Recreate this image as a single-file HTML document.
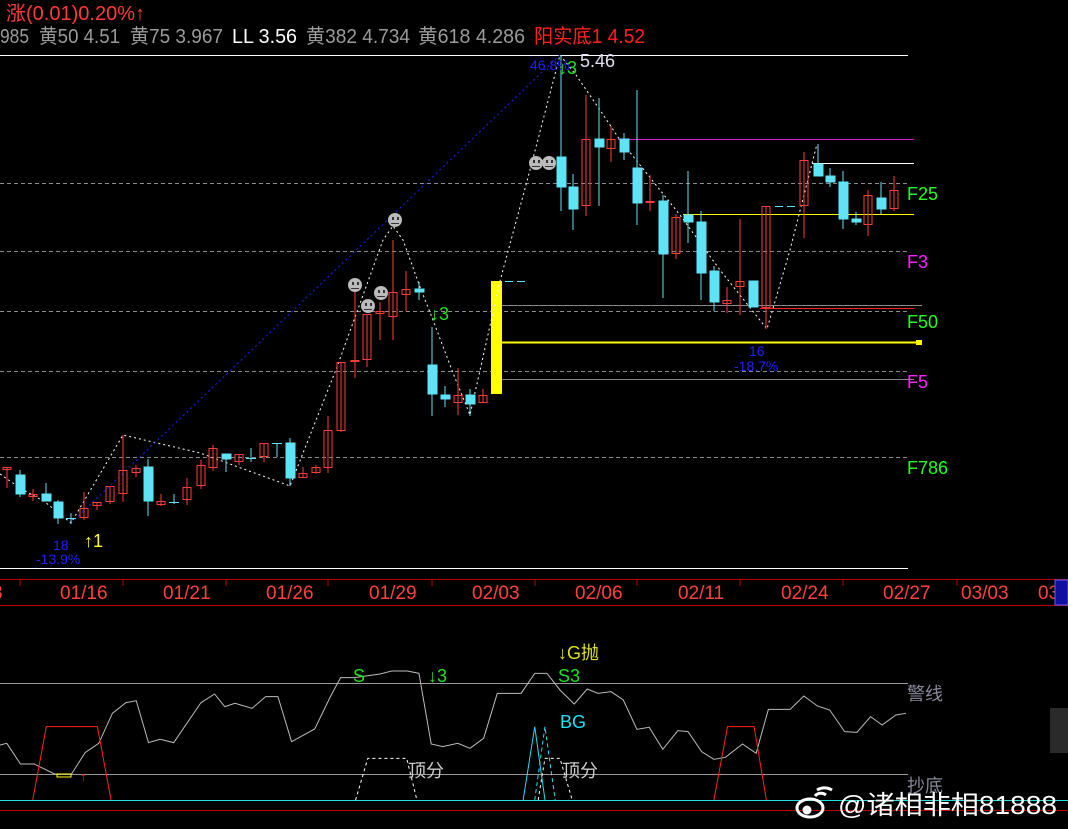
<!DOCTYPE html>
<html><head><meta charset="utf-8"><style>
html,body{margin:0;padding:0;background:#000;width:1068px;height:829px;overflow:hidden}
svg{display:block}
text{font-family:"Liberation Sans","Noto Sans CJK SC",sans-serif}
</style></head><body>
<svg width="1068" height="829" viewBox="0 0 1068 829" xmlns="http://www.w3.org/2000/svg">
<rect width="1068" height="829" fill="#000"/>
<!-- header -->
<text x="6" y="20" font-size="20" fill="#ff3a3a" textLength="139" lengthAdjust="spacingAndGlyphs">涨(0.01)0.20%↑</text>
<g font-size="20" fill="#9a9a9a">
<text x="0" y="43" textLength="29" lengthAdjust="spacingAndGlyphs">985</text>
<text x="39" y="43" textLength="81" lengthAdjust="spacingAndGlyphs">黄50 4.51</text>
<text x="130" y="43" textLength="93" lengthAdjust="spacingAndGlyphs">黄75 3.967</text>
<text x="232" y="43" textLength="65" lengthAdjust="spacingAndGlyphs" fill="#fff">LL 3.56</text>
<text x="306" y="43" textLength="104" lengthAdjust="spacingAndGlyphs">黄382 4.734</text>
<text x="418" y="43" textLength="107" lengthAdjust="spacingAndGlyphs">黄618 4.286</text>
<text x="534" y="43" textLength="111" lengthAdjust="spacingAndGlyphs" fill="#ff2020">阳实底1 4.52</text>
</g>

<!-- main lines -->
<line x1="0" y1="55.5" x2="908" y2="55.5" stroke="#fff"/>
<g stroke="#8a8a8a" stroke-dasharray="4,3">
<line x1="0" y1="183.5" x2="908" y2="183.5"/>
<line x1="0" y1="251.5" x2="908" y2="251.5"/>
<line x1="0" y1="311.5" x2="908" y2="311.5"/>
<line x1="0" y1="371.5" x2="908" y2="371.5"/>
<line x1="0" y1="457.5" x2="908" y2="457.5"/>
</g>
<line x1="0" y1="568.5" x2="908" y2="568.5" stroke="#fff"/>
<line x1="618" y1="139.5" x2="914" y2="139.5" stroke="#d020d0"/>
<line x1="812" y1="163.5" x2="914" y2="163.5" stroke="#fff"/>
<line x1="683" y1="214.5" x2="914" y2="214.5" stroke="#ffff00"/>
<line x1="496" y1="305.5" x2="922" y2="305.5" stroke="#888"/>
<line x1="760" y1="308.5" x2="914" y2="308.5" stroke="#ff2020"/>
<line x1="502" y1="342.5" x2="918" y2="342.5" stroke="#ffff00" stroke-width="2"/>
<rect x="916" y="340" width="6" height="5" fill="#ffff00"/>
<line x1="496" y1="379.5" x2="914" y2="379.5" stroke="#888"/>
<line x1="505" y1="281.5" x2="526" y2="281.5" stroke="#5ee3f7" stroke-dasharray="8,4"/>
<line x1="775" y1="206.5" x2="797" y2="206.5" stroke="#5ee3f7" stroke-dasharray="8,4"/>
<rect x="491" y="281" width="11" height="113" fill="#ffff00"/>

<!-- zigzags -->
<polyline points="0,474 20,488 45,502 71,523 123,435 200,453 290,486 337,367 383,240 393,226 403,240 420,287 433,320 453,373 470,415 500,281 530,170 560,55 576,75 600,110 620,140 640,165 680,215 720,270 767,329 790,250 817,144" fill="none" stroke="#fff" stroke-dasharray="2,3"/>
<line x1="71" y1="523" x2="560" y2="55" stroke="#2020ff" stroke-dasharray="2,3"/>

<!-- candles -->
<g stroke-width="1">
<g stroke="#ff3c3c" fill="none">
<line x1="7" y1="468" x2="7" y2="488"/><rect x="3" y="467.5" width="8" height="2"/>
<line x1="33" y1="489" x2="33" y2="501"/><rect x="29" y="494.5" width="8" height="2"/>
<line x1="84" y1="492" x2="84" y2="520"/><rect x="80" y="508.5" width="8" height="9"/>
<line x1="97" y1="502" x2="97" y2="510"/><rect x="93" y="502.5" width="8" height="3"/>
<line x1="110" y1="486" x2="110" y2="504"/><rect x="106" y="486.5" width="8" height="15"/>
<line x1="123" y1="435" x2="123" y2="502"/><rect x="119" y="470.5" width="8" height="23"/>
<line x1="136" y1="465" x2="136" y2="477"/><rect x="132" y="468.5" width="8" height="4"/>
<line x1="161" y1="494" x2="161" y2="506"/><rect x="157" y="501.5" width="8" height="3"/>
<line x1="187" y1="478" x2="187" y2="505"/><rect x="183" y="487.5" width="8" height="12"/>
<line x1="201" y1="460" x2="201" y2="489"/><rect x="197" y="465.5" width="8" height="20"/>
<line x1="213" y1="445" x2="213" y2="471"/><rect x="209" y="448.5" width="8" height="19"/>
<line x1="239" y1="454" x2="239" y2="465"/><rect x="235" y="454.5" width="8" height="7"/>
<line x1="264" y1="443" x2="264" y2="462"/><rect x="260" y="443.5" width="8" height="13"/>
<line x1="303" y1="467" x2="303" y2="477"/><rect x="299" y="473.5" width="8" height="4"/>
<line x1="316" y1="465" x2="316" y2="474"/><rect x="312" y="467.5" width="8" height="5"/>
<line x1="328" y1="416" x2="328" y2="473"/><rect x="324" y="430.5" width="8" height="37"/>
<line x1="341" y1="362" x2="341" y2="432"/><rect x="337" y="362.5" width="8" height="68"/>
<line x1="355" y1="290" x2="355" y2="378"/><rect x="351" y="360.5" width="8" height="1"/>
<line x1="367" y1="314" x2="367" y2="367"/><rect x="363" y="314.5" width="8" height="45"/>
<line x1="380" y1="302" x2="380" y2="340"/><rect x="376" y="311.5" width="8" height="2"/>
<line x1="393" y1="240" x2="393" y2="340"/><rect x="389" y="292.5" width="8" height="24"/>
<line x1="406" y1="271" x2="406" y2="311"/><rect x="402" y="289.5" width="8" height="5"/>
<line x1="458" y1="368" x2="458" y2="415"/><rect x="454" y="395.5" width="8" height="7"/>
<line x1="483" y1="389" x2="483" y2="403"/><rect x="479" y="395.5" width="8" height="7"/>
<line x1="586" y1="95" x2="586" y2="216"/><rect x="582" y="139.5" width="8" height="66"/>
<line x1="611" y1="126" x2="611" y2="162"/><rect x="607" y="139.5" width="8" height="9"/>
<line x1="650" y1="175" x2="650" y2="211"/><rect x="646" y="201.5" width="8" height="1"/>
<line x1="676" y1="214" x2="676" y2="259"/><rect x="672" y="217.5" width="8" height="36"/>
<line x1="727" y1="287" x2="727" y2="313"/><rect x="723" y="300.5" width="8" height="3"/>
<line x1="740" y1="219" x2="740" y2="315"/><rect x="736" y="281.5" width="8" height="5"/>
<line x1="766" y1="206" x2="766" y2="329"/><rect x="762" y="206.5" width="8" height="101"/>
<line x1="804" y1="152" x2="804" y2="238"/><rect x="800" y="160.5" width="8" height="45"/>
<line x1="868" y1="190" x2="868" y2="236"/><rect x="864" y="195.5" width="8" height="29"/>
<line x1="894" y1="176" x2="894" y2="211"/><rect x="890" y="190.5" width="8" height="18"/>
</g>
<g stroke="#5ee3f7" fill="#5ee3f7">
<line x1="20" y1="470" x2="20" y2="497"/><rect x="16" y="475" width="9" height="19"/>
<line x1="46" y1="483" x2="46" y2="501"/><rect x="42" y="494" width="9" height="7"/>
<line x1="58" y1="500" x2="58" y2="524"/><rect x="54" y="502" width="9" height="16"/>
<line x1="71" y1="513" x2="71" y2="524"/><line x1="66" y1="518.5" x2="76" y2="518.5"/>
<line x1="148" y1="459" x2="148" y2="516"/><rect x="144" y="467" width="9" height="34"/>
<line x1="174" y1="494" x2="174" y2="504"/><line x1="169" y1="502.5" x2="179" y2="502.5"/>
<line x1="226" y1="454" x2="226" y2="472"/><rect x="222" y="454" width="9" height="5"/>
<line x1="251" y1="448" x2="251" y2="462"/><line x1="246" y1="458.5" x2="256" y2="458.5"/>
<line x1="277" y1="443" x2="277" y2="457"/><line x1="272" y1="443.5" x2="282" y2="443.5"/>
<line x1="290" y1="438" x2="290" y2="486"/><rect x="286" y="443" width="9" height="35"/>
<line x1="419" y1="282" x2="419" y2="300"/><rect x="415" y="289" width="9" height="3"/>
<line x1="432" y1="327" x2="432" y2="416"/><rect x="428" y="365" width="9" height="29"/>
<line x1="445" y1="386" x2="445" y2="407"/><rect x="441" y="395" width="9" height="4"/>
<line x1="470" y1="389" x2="470" y2="416"/><rect x="466" y="395" width="9" height="9"/>
<line x1="561" y1="55" x2="561" y2="211"/><rect x="557" y="157" width="9" height="30"/>
<line x1="573" y1="174" x2="573" y2="230"/><rect x="569" y="187" width="9" height="22"/>
<line x1="599" y1="98" x2="599" y2="206"/><rect x="595" y="139" width="9" height="8"/>
<line x1="624" y1="133" x2="624" y2="160"/><rect x="620" y="139" width="9" height="13"/>
<line x1="637" y1="90" x2="637" y2="225"/><rect x="633" y="168" width="9" height="35"/>
<line x1="663" y1="195" x2="663" y2="298"/><rect x="659" y="201" width="9" height="53"/>
<line x1="688" y1="171" x2="688" y2="243"/><rect x="684" y="215" width="9" height="7"/>
<line x1="701" y1="211" x2="701" y2="300"/><rect x="697" y="222" width="9" height="51"/>
<line x1="714" y1="266" x2="714" y2="311"/><rect x="710" y="271" width="9" height="31"/>
<rect x="749" y="281" width="9" height="26"/>
<line x1="818" y1="144" x2="818" y2="176"/><rect x="814" y="164" width="9" height="12"/>
<line x1="830" y1="168" x2="830" y2="187"/><rect x="826" y="176" width="9" height="6"/>
<line x1="843" y1="171" x2="843" y2="229"/><rect x="839" y="182" width="9" height="37"/>
<line x1="856" y1="212" x2="856" y2="225"/><rect x="852" y="219" width="9" height="3"/>
<line x1="881" y1="182" x2="881" y2="214"/><rect x="877" y="198" width="9" height="11"/>
</g>
</g>

<!-- smileys -->
<g fill="#bbb">
<circle cx="355" cy="285" r="7"/><circle cx="368" cy="306" r="7"/><circle cx="381" cy="293" r="7"/><circle cx="395" cy="220" r="7"/><circle cx="536" cy="163" r="7"/><circle cx="549" cy="163" r="7"/>
</g>
<g fill="#333">
<rect x="352" y="282" width="2" height="3"/><rect x="357" y="282" width="2" height="3"/><rect x="351" y="288" width="8" height="1"/>
<rect x="365" y="303" width="2" height="3"/><rect x="370" y="303" width="2" height="3"/><rect x="364" y="309" width="8" height="1"/>
<rect x="378" y="290" width="2" height="3"/><rect x="383" y="290" width="2" height="3"/><rect x="377" y="296" width="8" height="1"/>
<rect x="392" y="217" width="2" height="3"/><rect x="397" y="217" width="2" height="3"/><rect x="391" y="223" width="8" height="1"/>
<rect x="533" y="160" width="2" height="3"/><rect x="538" y="160" width="2" height="3"/><rect x="532" y="166" width="8" height="1"/>
<rect x="546" y="160" width="2" height="3"/><rect x="551" y="160" width="2" height="3"/><rect x="545" y="166" width="8" height="1"/>
</g>

<!-- labels -->
<text x="530" y="70" font-size="14" fill="#2020ff">46.8%</text>
<text x="558" y="74" font-size="18" fill="#20e020">↓3</text>
<text x="580" y="67" font-size="18" fill="#e0e0f0">5.46</text>
<text x="53" y="550" font-size="14" fill="#2020ff">18</text>
<text x="36" y="564" font-size="14" fill="#2020ff">-13.9%</text>
<text x="84" y="547" font-size="18" fill="#ffff20">↑1</text>
<text x="430" y="320" font-size="18" fill="#20e020">↓3</text>
<text x="749" y="356" font-size="14" fill="#2020ff">16</text>
<text x="734" y="371" font-size="14" fill="#2020ff">-18.7%</text>
<g font-size="18">
<text x="907" y="200" fill="#20ff20">F25</text>
<text x="907" y="268" fill="#ff20ff">F3</text>
<text x="907" y="328" fill="#20ff20">F50</text>
<text x="907" y="388" fill="#ff20ff">F5</text>
<text x="907" y="474" fill="#20ff20">F786</text>
</g>

<!-- axis -->
<line x1="0" y1="579.5" x2="1068" y2="579.5" stroke="#c00000"/>
<line x1="0" y1="605.5" x2="1068" y2="605.5" stroke="#c00000"/>
<g stroke="#c00000">
<line x1="20" y1="580" x2="20" y2="586"/><line x1="123" y1="580" x2="123" y2="586"/><line x1="226" y1="580" x2="226" y2="586"/><line x1="328" y1="580" x2="328" y2="586"/><line x1="432" y1="580" x2="432" y2="586"/><line x1="535" y1="580" x2="535" y2="586"/><line x1="637" y1="580" x2="637" y2="586"/><line x1="740" y1="580" x2="740" y2="586"/><line x1="843" y1="580" x2="843" y2="586"/><line x1="957" y1="580" x2="957" y2="586"/>
</g>
<g font-size="19" fill="#ff4040">
<text x="-8" y="599">3</text>
<text x="60" y="599">01/16</text>
<text x="163" y="599">01/21</text>
<text x="266" y="599">01/26</text>
<text x="369" y="599">01/29</text>
<text x="472" y="599">02/03</text>
<text x="575" y="599">02/06</text>
<text x="678" y="599">02/11</text>
<text x="781" y="599">02/24</text>
<text x="883" y="599">02/27</text>
<text x="961" y="599">03/03</text>
<text x="1038" y="599">03</text>
</g>
<rect x="1055" y="580" width="13" height="25" fill="#1010a0" stroke="#6060ff"/>

<!-- indicator -->
<line x1="0" y1="683.5" x2="908" y2="683.5" stroke="#999"/>
<line x1="0" y1="774.5" x2="908" y2="774.5" stroke="#999"/>
<line x1="0" y1="800.5" x2="1068" y2="800.5" stroke="#20e0e0"/>
<line x1="0" y1="810.5" x2="1068" y2="810.5" stroke="#c00000"/>
<g transform="translate(0,570) scale(0.6812,0.3333)" fill="none">
<polyline vector-effect="non-scaling-stroke" stroke="#bbb" points="0,525 10,520 30,582 50,582 80,612 105,612 125,548 145,520 165,430 185,398 200,392 218,518 235,508 255,518 295,398 315,372 330,410 345,400 370,415 390,380 408,380 428,515 462,477 485,380 500,323 520,323 558,312 575,303 598,303 615,310 633,522 650,530 672,520 690,535 710,505 730,370 765,370 785,310 803,310 822,360 843,402 862,357 878,370 897,365 915,390 935,478 953,472 973,538 995,482 1010,485 1030,545 1048,568 1065,562 1090,522 1110,550 1128,418 1160,418 1180,378 1200,408 1218,420 1240,485 1258,487 1278,440 1295,465 1315,435 1330,430"/>
<polyline vector-effect="non-scaling-stroke" stroke="#ff2020" points="48,690 68,470 143,470 163,690"/>
<polyline vector-effect="non-scaling-stroke" stroke="#ff2020" points="1048,690 1068,470 1107,470 1125,690"/>
<polyline vector-effect="non-scaling-stroke" stroke="#fff" stroke-dasharray="3,3" points="522,690 540,565 597,565 612,690"/>
<polyline vector-effect="non-scaling-stroke" stroke="#fff" stroke-dasharray="3,3" points="790,690 800,565 822,565 840,690"/>
<polyline vector-effect="non-scaling-stroke" stroke="#20e0f0" points="768,690 785,470 800,690"/>
<polyline vector-effect="non-scaling-stroke" stroke="#20e0f0" stroke-dasharray="4,3" points="785,690 800,470 815,690"/>
</g>
<rect x="57" y="774" width="14" height="3" fill="none" stroke="#ffff00"/>
<text x="80" y="781" font-size="13" fill="#ff2020">↑</text>
<g font-size="18">
<text x="353" y="682" fill="#20e020">S</text>
<text x="428" y="682" fill="#20e020">↓3</text>
<text x="558" y="659" fill="#e0e020">↓G抛</text>
<text x="558" y="682" fill="#20e020">S3</text>
<text x="560" y="728" fill="#20e0f0">BG</text>
<text x="408" y="777" fill="#ccc">顶分</text>
<text x="562" y="777" fill="#ccc">顶分</text>
<text x="907" y="700" fill="#889">警线</text>
<text x="907" y="792" fill="#889">抄底</text>
</g>
<rect x="1050" y="708" width="18" height="45" fill="#2a2a2a"/>

<!-- watermark -->
<g fill="none" stroke="#fff" stroke-width="3">
<ellipse cx="810" cy="808" rx="13" ry="9"/>
<circle cx="807" cy="810" r="3" fill="#fff"/>
<path d="M815 796 a8 8 0 0 1 11 -1"/>
<path d="M817 790 a14 14 0 0 1 15 0"/>
</g>
<text x="838" y="814" font-size="26" fill="#fff" textLength="219" lengthAdjust="spacingAndGlyphs">@诸相非相81888</text>
</svg>
</body></html>
